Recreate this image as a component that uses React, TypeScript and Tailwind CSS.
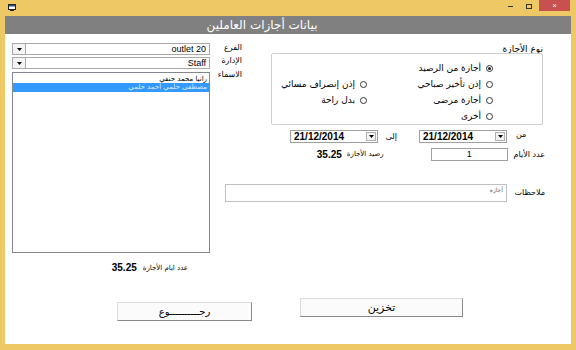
import React from "react";

const ar = { fontFamily: '"DejaVu Sans", "Noto Sans", sans-serif' };
const lat = { fontFamily: '"Liberation Sans", Arial, sans-serif' };

function Arrow() {
  return (
    <svg width="5" height="3" viewBox="0 0 5 3">
      <path d="M0 0 H5 L2.5 3 Z" fill="#000" />
    </svg>
  );
}

function Combo({ text }: { text: string }) {
  return (
    <div className="flex h-[12px] w-[198px] border border-[#a9a9a9] bg-white">
      <div className="flex w-[13px] items-center justify-center border-r border-[#a9a9a9] bg-[#f4f4f4]">
        <Arrow />
      </div>
      <div className="flex flex-1 items-center justify-end pr-[3px] text-[9px] leading-none text-black" style={lat}>
        {text}
      </div>
    </div>
  );
}

function DatePicker() {
  return (
    <div className="flex h-[13px] w-[88px] items-center border border-[#a0a0a0] bg-white">
      <div className="flex-1 pl-[3px] text-[10px] font-bold leading-none text-black" style={lat}>
        21/12/2014
      </div>
      <div className="mr-[1px] flex h-[9px] w-[10px] items-center justify-center border border-[#b0b0b0] bg-[#f2f2f2]">
        <Arrow />
      </div>
    </div>
  );
}

function Radio({ label, checked }: { label: string; checked?: boolean }) {
  return (
    <div className="flex h-[16px] items-center justify-end gap-[5px]">
      <span className="whitespace-nowrap text-[9px] leading-none text-black" style={ar} dir="rtl">
        {label}
      </span>
      <span className="flex h-[7px] w-[7px] items-center justify-center rounded-full border border-[#333]">
        {checked ? <span className="h-[3px] w-[3px] rounded-full bg-[#222]" /> : null}
      </span>
    </div>
  );
}

export default function App() {
  return (
    <div className="flex h-[350px] w-[576px] flex-col overflow-hidden bg-[#efc866]">
      {/* title bar */}
      <div className="flex h-[16px] shrink-0 items-start">
        <div className="ml-[8px] mt-[4px]">
          <svg width="8" height="7" viewBox="0 0 8 7">
            <rect x="0.5" y="0.5" width="7" height="5" fill="#fff" stroke="#222" />
            <rect x="1" y="1" width="6" height="1.5" fill="#2a4f8a" />
            <rect x="2" y="6" width="4" height="1" fill="#222" />
          </svg>
        </div>
        <div className="flex-1" />
        <div className="mt-[6px] h-[1px] w-[5px] bg-[#333]" />
        <div className="ml-[13px] mt-[4px] h-[5px] w-[6px] border border-[#333]" />
        <div className="ml-[7px] mr-[6px] flex h-[11px] w-[31px] items-center justify-center bg-[#c8514f] text-[8px] leading-none text-white" style={lat}>
          ×
        </div>
      </div>

      {/* body */}
      <div className="mx-[5px] mb-[6px] flex flex-1 flex-col bg-white">
        <div className="flex h-[18px] shrink-0 items-center justify-center bg-[#808080] pr-[52px]">
          <span className="text-[12px] leading-none text-white" style={ar} dir="rtl">
            بيانات أجازات العاملين
          </span>
        </div>

        <div className="flex flex-1 flex-col">
          <div className="flex h-[239px]">
            {/* left column */}
            <div className="ml-[7px] flex w-[198px] flex-col">
              <div className="mt-[9px]">
                <Combo text="outlet 20" />
              </div>
              <div className="mt-[2px]">
                <Combo text="Staff" />
              </div>
              <div className="mt-[3px] flex h-[181px] flex-col border border-[#828790] bg-white pt-[2px]">
                <div className="flex h-[8px] items-center justify-start pr-[2px] text-[7px] leading-none text-black" style={ar} dir="rtl">
                  <span>رانيا محمد حنفي</span>
                </div>
                <div className="flex h-[9px] items-center justify-start bg-[#3399ff] pr-[2px] text-[7px] leading-none text-[#dfeeff]" style={ar} dir="rtl">
                  <span>مصطفى حلمي احمد حلمي</span>
                </div>
              </div>
              <div className="mt-[10px] flex items-center justify-end gap-[6px] pr-[22px]">
                <span className="text-[10px] font-bold leading-none text-black" style={lat}>
                  35.25
                </span>
                <span className="whitespace-nowrap text-[7px] leading-none text-black" style={ar} dir="rtl">
                  عدد ايام الأجازة
                </span>
              </div>
            </div>

            {/* right column */}
            <div className="ml-[10px] flex w-[325px] flex-col">
              <div className="flex">
                <div className="mt-[10px] flex w-[22px] flex-col items-end text-[8px] leading-none text-black" style={ar}>
                  <span className="h-[13px] whitespace-nowrap" dir="rtl">الفرع</span>
                  <span className="h-[14px] whitespace-nowrap" dir="rtl">الإدارة</span>
                  <span className="whitespace-nowrap" dir="rtl">الاسماء</span>
                </div>
                <div className="ml-[29px] flex w-[272px] flex-col">
                  <div className="mt-[11px] flex h-[8px] justify-end">
                    <span className="whitespace-nowrap text-[9px] leading-none text-black" style={ar} dir="rtl">
                      نوع الأجازة
                    </span>
                  </div>
                  <div className="flex h-[72px] rounded-[2px] border border-[#cfcfcf] pt-[6px]">
                    <div className="flex w-[95px] flex-col">
                      <div className="h-[16px]" />
                      <Radio label="إذن إنصراف مسائي" />
                      <Radio label="بدل راحة" />
                    </div>
                    <div className="ml-[30px] flex w-[96px] flex-col">
                      <Radio label="أجازة من الرصيد" checked />
                      <Radio label="إذن تأخير صباحي" />
                      <Radio label="أجازة مرضى" />
                      <Radio label="أخرى" />
                    </div>
                  </div>
                </div>
              </div>

              {/* dates */}
              <div className="mt-[5px] flex items-center">
                <div className="ml-[70px]">
                  <DatePicker />
                </div>
                <span className="ml-[7px] w-[12px] whitespace-nowrap text-[8px] leading-none text-black" style={ar} dir="rtl">
                  إلى
                </span>
                <div className="ml-[22px]">
                  <DatePicker />
                </div>
                <span className="mb-[4px] ml-[9px] whitespace-nowrap text-[8px] leading-none text-black" style={ar} dir="rtl">
                  من
                </span>
              </div>

              {/* days */}
              <div className="mt-[5px] flex items-center">
                <div className="flex w-[165px] items-center justify-end gap-[5px]">
                  <span className="text-[10px] font-bold leading-none text-black" style={lat}>
                    35.25
                  </span>
                  <span className="whitespace-nowrap text-[7px] leading-none text-black" style={ar} dir="rtl">
                    رصيد الأجازة
                  </span>
                </div>
                <div className="ml-[47px] flex h-[13px] w-[78px] items-center justify-center border border-[#a0a0a0] bg-white text-[9px] leading-none text-black" style={lat}>
                  1
                </div>
                <div className="ml-[7px] flex w-[30px] justify-end">
                  <span className="whitespace-nowrap text-[8px] leading-none text-black" style={ar} dir="rtl">
                    عدد الأيام
                  </span>
                </div>
              </div>

              {/* notes */}
              <div className="mt-[23px] flex items-center">
                <div className="ml-[5px] flex h-[18px] w-[282px] justify-end border border-[#c0c0c0] bg-white pr-[3px] pt-[2px]">
                  <span className="text-[6px] leading-none text-[#666]" style={ar} dir="rtl">
                    أجازة
                  </span>
                </div>
                <div className="ml-[8px] flex w-[30px] justify-end">
                  <span className="whitespace-nowrap text-[8px] leading-none text-black" style={ar} dir="rtl">
                    ملاحظات
                  </span>
                </div>
              </div>
            </div>
          </div>

          {/* buttons */}
          <div className="mt-[25px] flex items-start">
            <button className="ml-[112px] mt-[4px] flex h-[19px] w-[135px] items-center justify-center border border-[#dcdcdc] border-b-[#8a8a8a] border-r-[#8a8a8a] bg-[#fbfbfb] text-[10px] leading-none text-black" style={ar} dir="rtl">
              رجــــــــــوع
            </button>
            <button className="ml-[48px] flex h-[19px] w-[163px] items-center justify-center border border-[#dcdcdc] border-b-[#8a8a8a] border-r-[#8a8a8a] bg-[#fbfbfb] text-[11px] leading-none text-black" style={ar} dir="rtl">
              تخزين
            </button>
          </div>
        </div>
      </div>
    </div>
  );
}
